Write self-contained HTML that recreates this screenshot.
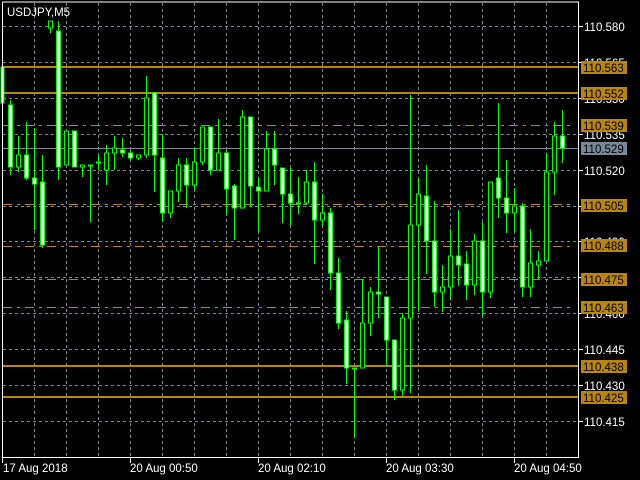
<!DOCTYPE html>
<html><head><meta charset="utf-8"><style>
html,body{margin:0;padding:0;background:#000;width:640px;height:480px;overflow:hidden}
svg{display:block}
text{font-family:"Liberation Sans",sans-serif;font-size:11.5px}
</style></head><body>
<svg width="640" height="480" viewBox="0 0 640 480" xmlns="http://www.w3.org/2000/svg" shape-rendering="crispEdges">
<rect width="640" height="480" fill="#000"/>
<g stroke="#778899" stroke-width="1" stroke-dasharray="3,3">
<line x1="34.5" y1="3" x2="34.5" y2="457"/><line x1="66.5" y1="3" x2="66.5" y2="457"/><line x1="98.5" y1="3" x2="98.5" y2="457"/><line x1="130.5" y1="3" x2="130.5" y2="457"/><line x1="162.5" y1="3" x2="162.5" y2="457"/><line x1="194.5" y1="3" x2="194.5" y2="457"/><line x1="226.5" y1="3" x2="226.5" y2="457"/><line x1="258.5" y1="3" x2="258.5" y2="457"/><line x1="290.5" y1="3" x2="290.5" y2="457"/><line x1="322.5" y1="3" x2="322.5" y2="457"/><line x1="354.5" y1="3" x2="354.5" y2="457"/><line x1="386.5" y1="3" x2="386.5" y2="457"/><line x1="418.5" y1="3" x2="418.5" y2="457"/><line x1="450.5" y1="3" x2="450.5" y2="457"/><line x1="482.5" y1="3" x2="482.5" y2="457"/><line x1="514.5" y1="3" x2="514.5" y2="457"/><line x1="546.5" y1="3" x2="546.5" y2="457"/>
<line x1="3" y1="26.5" x2="578" y2="26.5"/><line x1="3" y1="62.5" x2="578" y2="62.5"/><line x1="3" y1="98.5" x2="578" y2="98.5"/><line x1="3" y1="134.5" x2="578" y2="134.5"/><line x1="3" y1="170.5" x2="578" y2="170.5"/><line x1="3" y1="206.5" x2="578" y2="206.5"/><line x1="3" y1="241.5" x2="578" y2="241.5"/><line x1="3" y1="277.5" x2="578" y2="277.5"/><line x1="3" y1="313.5" x2="578" y2="313.5"/><line x1="3" y1="349.5" x2="578" y2="349.5"/><line x1="3" y1="385.5" x2="578" y2="385.5"/><line x1="3" y1="421.5" x2="578" y2="421.5"/>
</g>
<g stroke="#b8860b" stroke-width="1" stroke-dasharray="9,5,3,5">
<line x1="3" y1="125.5" x2="572" y2="125.5"/><line x1="3" y1="204.5" x2="572" y2="204.5"/><line x1="3" y1="246.5" x2="572" y2="246.5"/><line x1="3" y1="279.5" x2="572" y2="279.5"/><line x1="3" y1="307.5" x2="572" y2="307.5"/>
</g>
<line x1="3" y1="148.5" x2="578" y2="148.5" stroke="#778899"/>
<g stroke="#b8860b" stroke-width="2">
<line x1="3" y1="67" x2="578" y2="67"/><line x1="3" y1="93" x2="578" y2="93"/><line x1="3" y1="366" x2="578" y2="366"/><line x1="3" y1="397" x2="578" y2="397"/>
</g>
<g id="c" stroke="#00ff00" stroke-width="1"></g>
<g stroke="#00ff00" stroke-width="1">
<line x1="2.5" y1="62" x2="2.5" y2="110"/><rect x="1" y="67" width="3" height="36" fill="#fff"/>
<line x1="10.5" y1="100" x2="10.5" y2="175"/><rect x="8.5" y="105" width="4" height="62" fill="#fff"/>
<line x1="18.5" y1="136" x2="18.5" y2="172"/><rect x="16.5" y="155" width="4" height="12" fill="#000"/>
<line x1="26.5" y1="122" x2="26.5" y2="180"/><rect x="24.5" y="155" width="4" height="23" fill="#fff"/>
<line x1="34.5" y1="128" x2="34.5" y2="230"/><rect x="32.5" y="178" width="4" height="6" fill="#fff"/>
<line x1="42.5" y1="155" x2="42.5" y2="248"/><rect x="40.5" y="182" width="4" height="63" fill="#fff"/>
<line x1="50.5" y1="21" x2="50.5" y2="33"/><rect x="48.5" y="21" width="4" height="7" fill="#000"/>
<line x1="58.5" y1="21" x2="58.5" y2="180"/><rect x="56.5" y="31" width="4" height="136" fill="#fff"/>
<line x1="66.5" y1="131" x2="66.5" y2="165"/><rect x="64.5" y="131" width="4" height="34" fill="#000"/>
<line x1="74.5" y1="131" x2="74.5" y2="167"/><rect x="72.5" y="131" width="4" height="36" fill="#fff"/>
<line x1="82.5" y1="165" x2="82.5" y2="177"/><rect x="80.5" y="165" width="4" height="2" fill="#000"/>
<line x1="90.5" y1="165" x2="90.5" y2="222"/><rect x="88.5" y="165" width="4" height="1" fill="#fff"/>
<line x1="98.5" y1="155" x2="98.5" y2="170"/><rect x="96.5" y="162" width="4" height="1" fill="#fff"/>
<line x1="106.5" y1="145" x2="106.5" y2="185"/><rect x="104.5" y="153" width="4" height="17" fill="#000"/>
<line x1="114.5" y1="136" x2="114.5" y2="170"/><rect x="112.5" y="148" width="4" height="5" fill="#000"/>
<line x1="122.5" y1="138" x2="122.5" y2="157"/><rect x="120.5" y="150" width="4" height="3" fill="#fff"/>
<line x1="130.5" y1="150" x2="130.5" y2="160"/><rect x="128.5" y="153" width="4" height="5" fill="#fff"/>
<line x1="138.5" y1="155" x2="138.5" y2="160"/><rect x="136.5" y="155" width="4" height="3" fill="#000"/>
<line x1="146.5" y1="76" x2="146.5" y2="158"/><rect x="144.5" y="98" width="4" height="57" fill="#000"/>
<line x1="154.5" y1="93" x2="154.5" y2="192"/><rect x="152.5" y="93" width="4" height="62" fill="#fff"/>
<line x1="162.5" y1="134" x2="162.5" y2="222"/><rect x="160.5" y="158" width="4" height="55" fill="#fff"/>
<line x1="170.5" y1="191" x2="170.5" y2="218"/><rect x="168.5" y="191" width="4" height="22" fill="#000"/>
<line x1="178.5" y1="158" x2="178.5" y2="202"/><rect x="176.5" y="165" width="4" height="26" fill="#000"/>
<line x1="186.5" y1="158" x2="186.5" y2="208"/><rect x="184.5" y="165" width="4" height="20" fill="#fff"/>
<line x1="194.5" y1="148" x2="194.5" y2="190"/><rect x="192.5" y="162" width="4" height="23" fill="#000"/>
<line x1="202.5" y1="127" x2="202.5" y2="165"/><rect x="200.5" y="127" width="4" height="35" fill="#000"/>
<line x1="210.5" y1="127" x2="210.5" y2="175"/><rect x="208.5" y="127" width="4" height="43" fill="#fff"/>
<line x1="218.5" y1="119" x2="218.5" y2="170"/><rect x="216.5" y="153" width="4" height="17" fill="#000"/>
<line x1="226.5" y1="150" x2="226.5" y2="214"/><rect x="224.5" y="153" width="4" height="36" fill="#fff"/>
<line x1="234.5" y1="184" x2="234.5" y2="240"/><rect x="232.5" y="186" width="4" height="22" fill="#fff"/>
<line x1="242.5" y1="110" x2="242.5" y2="208"/><rect x="240.5" y="117" width="4" height="91" fill="#000"/>
<line x1="250.5" y1="117" x2="250.5" y2="207"/><rect x="248.5" y="117" width="4" height="69" fill="#fff"/>
<line x1="258.5" y1="177" x2="258.5" y2="232"/><rect x="256.5" y="187" width="4" height="4" fill="#fff"/>
<line x1="266.5" y1="131" x2="266.5" y2="191"/><rect x="264.5" y="149" width="4" height="42" fill="#000"/>
<line x1="274.5" y1="131" x2="274.5" y2="185"/><rect x="272.5" y="149" width="4" height="16" fill="#fff"/>
<line x1="282.5" y1="168" x2="282.5" y2="223"/><rect x="280.5" y="168" width="4" height="26" fill="#fff"/>
<line x1="290.5" y1="168" x2="290.5" y2="226"/><rect x="288.5" y="194" width="4" height="9" fill="#fff"/>
<line x1="298.5" y1="177" x2="298.5" y2="214"/><rect x="296.5" y="203" width="4" height="1" fill="#fff"/>
<line x1="306.5" y1="170" x2="306.5" y2="205"/><rect x="304.5" y="182" width="4" height="21" fill="#000"/>
<line x1="314.5" y1="162" x2="314.5" y2="264"/><rect x="312.5" y="182" width="4" height="38" fill="#fff"/>
<line x1="322.5" y1="194" x2="322.5" y2="226"/><rect x="320.5" y="213" width="4" height="7" fill="#000"/>
<line x1="330.5" y1="208" x2="330.5" y2="290"/><rect x="328.5" y="213" width="4" height="60" fill="#fff"/>
<line x1="338.5" y1="258" x2="338.5" y2="329"/><rect x="336.5" y="273" width="4" height="50" fill="#fff"/>
<line x1="346.5" y1="311" x2="346.5" y2="384"/><rect x="344.5" y="320" width="4" height="48" fill="#fff"/>
<line x1="354.5" y1="368" x2="354.5" y2="437"/><rect x="352.5" y="368" width="4" height="1" fill="#000"/>
<line x1="362.5" y1="279" x2="362.5" y2="368"/><rect x="360.5" y="323" width="4" height="45" fill="#000"/>
<line x1="370.5" y1="287" x2="370.5" y2="336"/><rect x="368.5" y="292" width="4" height="31" fill="#000"/>
<line x1="378.5" y1="247" x2="378.5" y2="318"/><rect x="376.5" y="292" width="4" height="2" fill="#fff"/>
<line x1="386.5" y1="297" x2="386.5" y2="365"/><rect x="384.5" y="297" width="4" height="43" fill="#fff"/>
<line x1="394.5" y1="340" x2="394.5" y2="400"/><rect x="392.5" y="340" width="4" height="50" fill="#fff"/>
<line x1="402.5" y1="313" x2="402.5" y2="396"/><rect x="400.5" y="318" width="4" height="72" fill="#000"/>
<line x1="410.5" y1="95" x2="410.5" y2="393"/><rect x="408.5" y="225" width="4" height="93" fill="#000"/>
<line x1="418.5" y1="178" x2="418.5" y2="310"/><rect x="416.5" y="194" width="4" height="31" fill="#000"/>
<line x1="426.5" y1="165" x2="426.5" y2="274"/><rect x="424.5" y="196" width="4" height="45" fill="#fff"/>
<line x1="434.5" y1="201" x2="434.5" y2="307"/><rect x="432.5" y="241" width="4" height="51" fill="#fff"/>
<line x1="442.5" y1="265" x2="442.5" y2="312"/><rect x="440.5" y="287" width="4" height="5" fill="#000"/>
<line x1="450.5" y1="229" x2="450.5" y2="300"/><rect x="448.5" y="256" width="4" height="31" fill="#000"/>
<line x1="458.5" y1="210" x2="458.5" y2="286"/><rect x="456.5" y="256" width="4" height="9" fill="#fff"/>
<line x1="466.5" y1="251" x2="466.5" y2="300"/><rect x="464.5" y="264" width="4" height="21" fill="#fff"/>
<line x1="474.5" y1="234" x2="474.5" y2="295"/><rect x="472.5" y="241" width="4" height="44" fill="#000"/>
<line x1="482.5" y1="222" x2="482.5" y2="316"/><rect x="480.5" y="241" width="4" height="51" fill="#fff"/>
<line x1="490.5" y1="182" x2="490.5" y2="298"/><rect x="488.5" y="182" width="4" height="110" fill="#000"/>
<line x1="498.5" y1="103" x2="498.5" y2="218"/><rect x="496.5" y="178" width="4" height="20" fill="#fff"/>
<line x1="506.5" y1="160" x2="506.5" y2="233"/><rect x="504.5" y="198" width="4" height="15" fill="#fff"/>
<line x1="514.5" y1="188" x2="514.5" y2="232"/><rect x="512.5" y="206" width="4" height="7" fill="#000"/>
<line x1="522.5" y1="203" x2="522.5" y2="297"/><rect x="520.5" y="206" width="4" height="81" fill="#fff"/>
<line x1="530.5" y1="229" x2="530.5" y2="297"/><rect x="528.5" y="263" width="4" height="24" fill="#000"/>
<line x1="538.5" y1="251" x2="538.5" y2="279"/><rect x="536.5" y="261" width="4" height="4" fill="#000"/>
<line x1="546.5" y1="153" x2="546.5" y2="261"/><rect x="544.5" y="172" width="4" height="89" fill="#000"/>
<line x1="554.5" y1="122" x2="554.5" y2="195"/><rect x="552.5" y="136" width="4" height="36" fill="#000"/>
<line x1="562.5" y1="110" x2="562.5" y2="163"/><rect x="560.5" y="136" width="4" height="12" fill="#fff"/>
</g>
<g stroke="#fff" stroke-width="1">
<polyline points="2.5,2 2.5,457.5 578.5,457.5 578.5,2 2.5,2" fill="none"/>
<line x1="578" y1="26.5" x2="583" y2="26.5"/><line x1="578" y1="62.5" x2="583" y2="62.5"/><line x1="578" y1="98.5" x2="583" y2="98.5"/><line x1="578" y1="134.5" x2="583" y2="134.5"/><line x1="578" y1="170.5" x2="583" y2="170.5"/><line x1="578" y1="206.5" x2="583" y2="206.5"/><line x1="578" y1="241.5" x2="583" y2="241.5"/><line x1="578" y1="277.5" x2="583" y2="277.5"/><line x1="578" y1="313.5" x2="583" y2="313.5"/><line x1="578" y1="349.5" x2="583" y2="349.5"/><line x1="578" y1="385.5" x2="583" y2="385.5"/><line x1="578" y1="421.5" x2="583" y2="421.5"/>
<line x1="2.5" y1="457" x2="2.5" y2="463"/><line x1="130.5" y1="457" x2="130.5" y2="463"/><line x1="258.5" y1="457" x2="258.5" y2="463"/><line x1="386.5" y1="457" x2="386.5" y2="463"/><line x1="514.5" y1="457" x2="514.5" y2="463"/>
</g>
<g fill="#fff">
<text x="7" y="16">USDJPY,M5</text>
<text x="584" y="31">110.580</text><text x="584" y="67">110.565</text><text x="584" y="103">110.550</text><text x="584" y="139">110.535</text><text x="584" y="175">110.520</text><text x="584" y="211">110.505</text><text x="584" y="246">110.490</text><text x="584" y="282">110.475</text><text x="584" y="318">110.460</text><text x="584" y="354">110.445</text><text x="584" y="390">110.430</text><text x="584" y="426">110.415</text>
<text x="3" y="472">17 Aug 2018</text><text x="130" y="472">20 Aug 00:50</text><text x="258" y="472">20 Aug 02:10</text><text x="386" y="472">20 Aug 03:30</text><text x="514" y="472">20 Aug 04:50</text>
</g>
<g shape-rendering="crispEdges">
<rect x="581" y="61" width="46" height="13" fill="#b8860b"/><rect x="581" y="87" width="46" height="13" fill="#b8860b"/><rect x="581" y="119" width="46" height="13" fill="#b8860b"/><rect x="581" y="142" width="46" height="13" fill="#778899"/><rect x="581" y="199" width="46" height="13" fill="#b8860b"/><rect x="581" y="239" width="46" height="13" fill="#b8860b"/><rect x="581" y="273" width="46" height="13" fill="#b8860b"/><rect x="581" y="301" width="46" height="13" fill="#b8860b"/><rect x="581" y="360" width="46" height="13" fill="#b8860b"/><rect x="581" y="391" width="46" height="13" fill="#b8860b"/>
</g>
<g fill="#000">
<text x="583" y="72">110.563</text><text x="583" y="98">110.552</text><text x="583" y="130">110.539</text><text x="583" y="153">110.529</text><text x="583" y="210">110.505</text><text x="583" y="250">110.488</text><text x="583" y="284">110.475</text><text x="583" y="312">110.463</text><text x="583" y="371">110.438</text><text x="583" y="402">110.425</text>
</g>
</svg>
</body></html>
